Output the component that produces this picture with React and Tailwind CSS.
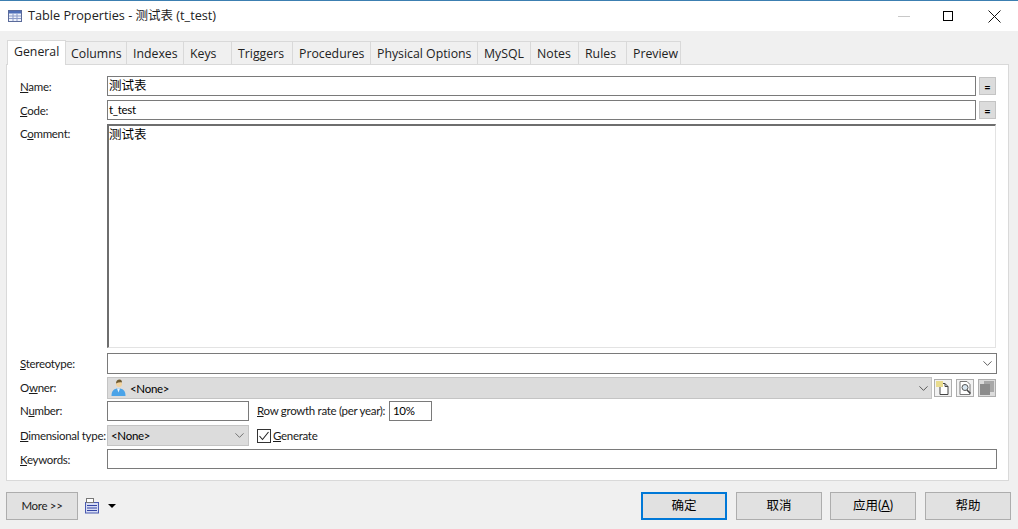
import { ChevronDown } from "lucide-react";

const TABS = [
  { label: "Columns", w: "w-[61px]", pad: "pl-[5px]" },
  { label: "Indexes", w: "w-[57px]", pad: "pl-[6px]" },
  { label: "Keys", w: "w-[48px]", pad: "pl-[6px]" },
  { label: "Triggers", w: "w-[61px]", pad: "pl-[6px]" },
  { label: "Procedures", w: "w-[78px]", pad: "pl-[6px]" },
  { label: "Physical Options", w: "w-[107px]", pad: "pl-[6px]" },
  { label: "MySQL", w: "w-[53px]", pad: "pl-[6px]" },
  { label: "Notes", w: "w-[48px]", pad: "pl-[6px]" },
  { label: "Rules", w: "w-[48px]", pad: "pl-[6px]" },
  { label: "Preview", w: "w-[54px]", pad: "pl-[6px]" },
];

function TableIcon() {
  return (
    <svg width="14" height="12" viewBox="0 0 14 12" className="shrink-0">
      <rect x="0.5" y="0.5" width="13" height="11" fill="#eef2fb" stroke="#5a6a9a" />
      <rect x="1" y="1" width="12" height="2.5" fill="#4f6fb8" />
      <path d="M5 3.500V11M9 3.500V11M1 6H13M1 8.500H13" stroke="#8d9cc8" />
    </svg>
  );
}

function PersonIcon() {
  return (
    <svg width="15" height="18" viewBox="0 0 15 18" className="shrink-0">
      <path d="M0.500 17c0-5 2-7.500 7-7.500s7 2.500 7 7.500z" fill="#4aa3e8" />
      <path d="M6 9.500l1.500 4 1.500-4z" fill="#e8f2fa" />
      <circle cx="8" cy="5" r="3" fill="#f2d3a0" />
      <path d="M5 4.500C5 2 6.500 .500 8.500 .500S11 2 11 3.500C9 3 7 3.500 5 4.500z" fill="#6e5a30" />
    </svg>
  );
}

function NewIcon() {
  return (
    <svg width="14" height="14" viewBox="0 0 14 14">
      <path d="M4 2.500h5l3 3v8H4z" fill="#fff" stroke="#444" />
      <path d="M9 2.500v3h3" fill="none" stroke="#444" />
      <rect x="0" y="0" width="7" height="6" fill="#e9dc8e" />
    </svg>
  );
}

function FindIcon() {
  return (
    <svg width="14" height="14" viewBox="0 0 14 14">
      <path d="M2 .500h7l3 3v10H2z" fill="#fff" stroke="#777" />
      <circle cx="7" cy="6.500" r="3" fill="#d8e6f0" stroke="#555" />
      <path d="M9 9l3.500 3.500" stroke="#444" strokeWidth="1.500" />
    </svg>
  );
}

function PropsIcon() {
  return (
    <svg width="14" height="14" viewBox="0 0 14 14">
      <rect x="4" y="0" width="10" height="11" fill="#a8a8a8" />
      <rect x="0" y="3" width="10" height="11" fill="#8c8c8c" />
    </svg>
  );
}

function ListIcon() {
  return (
    <svg width="15" height="16" viewBox="0 0 15 16">
      <rect x="0.500" y="4.500" width="13" height="10.500" fill="#d6dcf4" stroke="#4a5ab0" />
      <rect x="1.500" y="0.500" width="7" height="4" fill="#fff" stroke="#777" />
      <path d="M2 7.500h10M2 10h10M2 12.500h10" stroke="#3444a4" />
    </svg>
  );
}

function Label({ hot, before = "", after }) {
  return (
    <span className="block text-[11.500px] tracking-[-0.3px] leading-[14px] text-[#1a1a1a] whitespace-nowrap">
      {before}
      <span className="underline">{hot}</span>
      {after}
    </span>
  );
}

function Row({ label, height, children, className = "", labelClass = "" }) {
  return (
    <div className={`flex items-center ${height} ${className}`}>
      <div className={`w-[87px] shrink-0 ${labelClass}`}>{label}</div>
      {children}
    </div>
  );
}

function TextBox({ value, className = "" }) {
  return (
    <div className={`h-full border border-[#7a7a7a] bg-white pl-[1px] flex items-center text-[12.500px] text-black ${className}`}>
      {value}
    </div>
  );
}

function EqualButton() {
  return (
    <div className="ml-[3px] w-[17px] h-[18px] bg-[#dcdcdc] border border-[#c4c4c4] flex items-center justify-center text-[11px] font-bold leading-none text-black">
      =
    </div>
  );
}

function SmallButton({ children, className = "" }) {
  return (
    <div className={`w-[18px] h-[18px] border border-[#adadad] flex items-center justify-center ${className}`}>
      {children}
    </div>
  );
}

function DialogButton({ children, primary, className = "" }) {
  return (
    <div
      className={`w-[86px] h-[28px] bg-[#e1e1e1] flex items-center justify-center text-[12.500px] text-black ${
        primary ? "border-2 border-[#0078d7]" : "border border-[#adadad]"
      } ${className}`}
    >
      {children}
    </div>
  );
}

export default function App() {
  return (
    <div className="w-[1018px] h-[529px] bg-[#f0f0f0] flex flex-col overflow-hidden font-['Lato','Noto_Sans_CJK_SC',sans-serif]">
      {/* title bar */}
      <div className="h-[31px] shrink-0 bg-white border-t border-[#3c7fb1] flex items-center pl-[8px]">
        <TableIcon />
        <span className="ml-[6px] text-[12.700px] text-[#222] font-['Open_Sans','Noto_Sans_CJK_SC',sans-serif]">
          Table Properties - <span className="text-[12.500px]">测试表</span> (t_test)
        </span>
        <div className="ml-auto flex items-center">
          <div className="w-[12px] h-px bg-[#c8c8c8] mr-[33px]" />
          <div className="w-[10px] h-[10px] border border-black mr-[35px]" />
          <svg width="13" height="13" viewBox="0 0 13 13" className="mr-[17px]">
            <path d="M.5.500l12 12M12.500.500l-12 12" stroke="#111" strokeWidth="1" />
          </svg>
        </div>
      </div>

      {/* tabs */}
      <div className="h-[33px] shrink-0 pl-[7px] flex items-end text-[12.300px] text-[#222] font-['Open_Sans',sans-serif]">
        <div className="w-[59px] h-[25px] -mb-px relative z-10 bg-white border border-b-0 border-[#d9d9d9] pl-[6px] pt-[1px] leading-[20px]">
          General
        </div>
        {TABS.map((tab) => (
          <div
            key={tab.label}
            className={`${tab.w} ${tab.pad} h-[23px] bg-[#f0f0f0] border-t border-r border-[#d9d9d9] leading-[24px] whitespace-nowrap`}
          >
            {tab.label}
          </div>
        ))}
      </div>

      {/* general page */}
      <div className="mx-[6px] w-[1003px] h-[417px] shrink-0 bg-white border border-[#d9d9d9] pt-[11px] pl-[13px] flex flex-col">
        <Row label={<Label hot="N" after="ame:" />} height="h-[20px]" labelClass="pt-[2px]">
          <TextBox value="测试表" className="w-[869px]" />
          <EqualButton />
        </Row>
        <Row label={<Label hot="C" after="ode:" />} height="h-[20px]" className="mt-[4px]" labelClass="pt-[2px]">
          <TextBox value="t_test" className="w-[869px] !text-[11.500px] tracking-[-0.3px]" />
          <EqualButton />
        </Row>
        <div className="flex h-[224px] mt-[4px]">
          <div className="w-[87px] shrink-0 pt-[3px]">
            <Label before="C" hot="o" after="mment:" />
          </div>
          <div className="w-[889px] border-t-2 border-l-2 border-[#6e6e6e] border-b border-r border-b-[#e3e3e3] border-r-[#e3e3e3] text-[12.500px] text-black leading-[18px]">
            测试表
          </div>
        </div>
        <Row label={<Label hot="S" after="tereotype:" />} height="h-[21px]" className="mt-[5px]">
          <div className="w-[890px] h-full border border-[#7a7a7a] flex items-center justify-end pr-[1px]">
            <ChevronDown size={15} strokeWidth={1.250} className="text-[#333]" />
          </div>
        </Row>
        <Row label={<Label before="O" hot="w" after="ner:" />} height="h-[22px]" className="mt-[3px]">
          <div className="w-[825px] h-full bg-[#dcdcdc] border border-[#c4c4c4] flex items-center pl-[3px] text-[11.500px] tracking-[-0.3px] text-black">
            <PersonIcon />
            <span className="ml-[4px] mt-[1px]">&lt;None&gt;</span>
            <ChevronDown size={15} strokeWidth={1.250} className="ml-auto text-[#333]" />
          </div>
          <div className="flex ml-[2px] gap-[4px]">
            <SmallButton className="bg-[#f2f2f2]"><NewIcon /></SmallButton>
            <SmallButton className="bg-[#f2f2f2]"><FindIcon /></SmallButton>
            <SmallButton className="bg-[#dcdcdc]"><PropsIcon /></SmallButton>
          </div>
        </Row>
        <Row label={<Label before="N" hot="u" after="mber:" />} height="h-[20px]" className="mt-[2px]">
          <div className="w-[142px] h-full border border-[#7a7a7a]" />
          <span className="ml-[8px] w-[132px]">
            <Label hot="R" after="ow growth rate (per year):" />
          </span>
          <div className="w-[43px] h-full border border-[#7a7a7a] pl-[3px] text-[11.500px] tracking-[-0.3px] text-black flex items-center">10%</div>
        </Row>
        <Row label={<Label hot="D" after="imensional type:" />} height="h-[21px]" className="mt-[4px]">
          <div className="w-[142px] h-full bg-[#dcdcdc] border border-[#c4c4c4] flex items-center pl-[3px] text-[11.500px] tracking-[-0.3px] text-black">
            &lt;None&gt;
            <ChevronDown size={15} strokeWidth={1.250} className="ml-auto mr-[1px] text-[#555]" />
          </div>
          <div className="ml-[8px] w-[14px] h-[14px] border border-[#333] flex items-center justify-center">
            <svg width="12" height="12" viewBox="0 0 12 12">
              <path d="M1.500 6l3 3.500 6-7.500" fill="none" stroke="#222" strokeWidth="1.100" />
            </svg>
          </div>
          <span className="ml-[2px]">
            <Label hot="G" after="enerate" />
          </span>
        </Row>
        <Row label={<Label hot="K" after="eywords:" />} height="h-[20px]" className="mt-[3px]" labelClass="pt-[2px]">
          <div className="w-[890px] h-full border border-[#7a7a7a]" />
        </Row>
      </div>

      {/* footer */}
      <div className="flex items-start pt-[11px] pl-[6px] pr-[7px]">
        <div className="w-[72px] h-[28px] bg-[#e1e1e1] border border-[#adadad] flex items-center justify-center text-[11.500px] tracking-[-0.3px] text-[#222]">
          More &gt;&gt;
        </div>
        <div className="ml-[7px] h-[28px] flex items-center">
          <ListIcon />
          <span className="ml-[8px] w-0 h-0 border-x-[4px] border-x-transparent border-t-[4px] border-t-black" />
        </div>
        <div className="ml-auto flex">
          <DialogButton primary>确定</DialogButton>
          <DialogButton className="ml-[9px]">取消</DialogButton>
          <DialogButton className="ml-[8px]">
            应用(<span className="underline">A</span>)
          </DialogButton>
          <DialogButton className="ml-[9px]">帮助</DialogButton>
        </div>
      </div>
    </div>
  );
}
